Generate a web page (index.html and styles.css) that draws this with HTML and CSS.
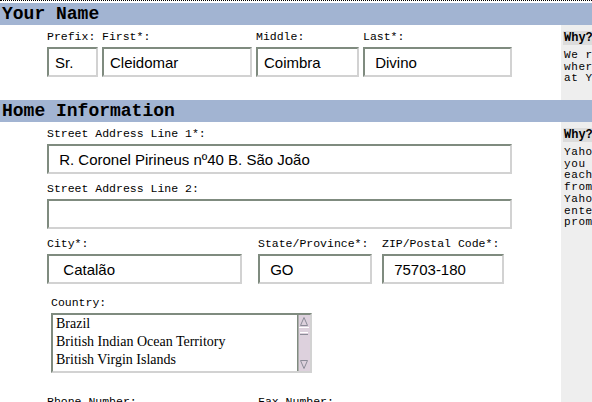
FILE: index.html
```html
<!DOCTYPE html>
<html lang="en">
<head>
    <meta charset="UTF-8">
    <meta name="viewport" content="width=device-width, initial-scale=1.0">
    <title>Registration</title>
    <link rel="stylesheet" href="styles.css">
</head>
<body>
    <div class="section-title">Your Name</div>
    <div class="section-body name-body">
        <div class="form-area">
            <div class="row">
                <div class="field w-prefix">
                    <label>Prefix:</label>
                    <input type="text" value="Sr.">
                </div>
                <div class="field w-first">
                    <label>First*:</label>
                    <input type="text" value="Cleidomar">
                </div>
                <div class="field w-middle">
                    <label>Middle:</label>
                    <input type="text" value="Coimbra">
                </div>
                <div class="field w-last">
                    <label>Last*:</label>
                    <input type="text" value=" Divino">
                </div>
            </div>
        </div>
        <div class="aside">
            <div class="why">Why?</div>
            <p>We require your name so we can<br>where it is needed for your<br>at Yahoo! account.</p>
        </div>
    </div>

    <div class="section-title">Home Information</div>
    <div class="section-body">
        <div class="form-area">
            <div class="row">
                <div class="field w-street">
                    <label>Street Address Line 1*:</label>
                    <input type="text" value=" R. Coronel Pirineus nº40 B. São João">
                </div>
            </div>
            <div class="row">
                <div class="field w-street">
                    <label>Street Address Line 2:</label>
                    <input type="text" value="">
                </div>
            </div>
            <div class="row">
                <div class="field w-city">
                    <label>City*:</label>
                    <input type="text" value="  Catalão">
                </div>
                <div class="field w-state">
                    <label>State/Province*:</label>
                    <input type="text" value=" GO">
                </div>
                <div class="field w-zip">
                    <label>ZIP/Postal Code*:</label>
                    <input type="text" value=" 75703-180">
                </div>
            </div>
            <div class="row country-row">
                <div class="field">
                    <label>Country:</label>
                    <div class="listbox">
                        <div class="options">
                            <div>Brazil</div>
                            <div>British Indian Ocean Territory</div>
                            <div>British Virgin Islands</div>
                        </div>
                        <svg class="scrollbar" width="13" height="56" viewBox="0 0 13 56">
                            <rect x="0" y="0" width="13" height="56" fill="#ddd1dd"/>
                            <rect x="0" y="0" width="1.5" height="56" fill="#7f8b7f"/>
                            <polygon points="3.5,10.5 7,2.5 10.5,10.5" fill="none" stroke="#8c8c98" stroke-width="1"/>
                            <line x1="2" y1="12.5" x2="12" y2="12.5" stroke="#ffffff" stroke-width="1"/>
                            <line x1="3" y1="17.5" x2="11" y2="17.5" stroke="#ffffff" stroke-width="1"/>
                            <line x1="3" y1="19.5" x2="11" y2="19.5" stroke="#8c8c98" stroke-width="1"/>
                            <polygon points="3.5,45.5 7,53.5 10.5,45.5" fill="none" stroke="#8c8c98" stroke-width="1"/>
                        </svg>
                    </div>
                </div>
            </div>
            <div class="row phone-row">
                <div class="field w-city">
                    <label>Phone Number:</label>
                    <input type="text" value="">
                </div>
                <div class="field w-state">
                    <label>Fax Number:</label>
                    <input type="text" value="">
                </div>
            </div>
        </div>
        <div class="aside">
            <div class="why">Why?</div>
            <p>Yahoo! uses this information so<br>you can get local content<br>each time you visit. Data<br>from this form is used by<br>Yahoo! to fill in forms you<br>enter on Yahoo! services and<br>promotions.</p>
        </div>
    </div>
</body>
</html>
```

FILE: styles.css
```css
* {
    box-sizing: border-box;
}
html, body {
    height: 100%;
}
body {
    margin: 0;
    padding-top: 2px;
    border-top: 1px dotted #000;
    background: #fff;
    color: #000;
    font-family: "Liberation Mono", "DejaVu Sans Mono", monospace;
    overflow: hidden;
}

/* Blaue Abschnittsbalken */
.section-title {
    background: #a2b4d2;
    height: 22px;
    line-height: 22px;
    padding-left: 2px;
    font-size: 18px;
    font-weight: bold;
    white-space: nowrap;
}

.section-body {
    display: flex;
}
.form-area {
    flex: 0 0 561px;
    padding: 5px 0 0 47px;
}
.name-body .form-area {
    padding-bottom: 23px;
}

.row {
    display: flex;
    gap: 4px;
    margin-bottom: 8px;
}
.name-body .row {
    margin-bottom: 0;
}

.field {
    display: flex;
    flex-direction: column;
}
.field label {
    font-size: 11.5px;
    line-height: 13px;
    margin-bottom: 4px;
    white-space: nowrap;
}
.field input {
    height: 30px;
    margin: 0;
    padding: 0 6px;
    border: 2px solid;
    border-color: #7f8b7f #d2d2d2 #d2d2d2 #7f8b7f;
    background: #fff;
    font-family: "Liberation Sans", Arial, sans-serif;
    font-size: 15px;
    color: #000;
    outline: none;
}

.w-prefix { width: 51px; }
.w-first { width: 150px; }
.w-middle { width: 103px; }
.w-last { width: 149px; }
.w-street { width: 465px; }
.w-city { width: 195px; margin-right: 12px; }
.w-state { width: 114px; margin-right: 6px; }
.w-zip { width: 122px; }

/* Abstände kollabieren mit der Zeile darüber */
.country-row {
    margin-top: 12px;
    padding-left: 4px;
    margin-bottom: 22px;
}

/* Länderliste mit Scrollbalken */
.listbox {
    display: flex;
    width: 261px;
    height: 60px;
    border: 2px solid;
    border-color: #7f8b7f #d2d2d2 #d2d2d2 #7f8b7f;
    background: #fff;
}
.options {
    flex: 1;
    padding: 0 3px;
    font-family: "Liberation Serif", "Times New Roman", serif;
    font-size: 14px;
    line-height: 18px;
    white-space: nowrap;
    overflow: hidden;
}
.scrollbar {
    display: block;
    flex: none;
}

/* Graue Hinweisspalte rechts */
.aside {
    flex: 1;
    min-width: 0;
    overflow: hidden;
    background: #eeeeee;
    padding: 6px 0 0 2px;
    white-space: nowrap;
}
.why {
    background: #dcdcdc;
    font-size: 12px;
    font-weight: bold;
    line-height: 14px;
    padding-left: 1px;
}
.aside p {
    margin: 5px 0 0 1px;
    font-size: 11px;
    letter-spacing: 0.6px;
    line-height: 11.7px;
}
```
